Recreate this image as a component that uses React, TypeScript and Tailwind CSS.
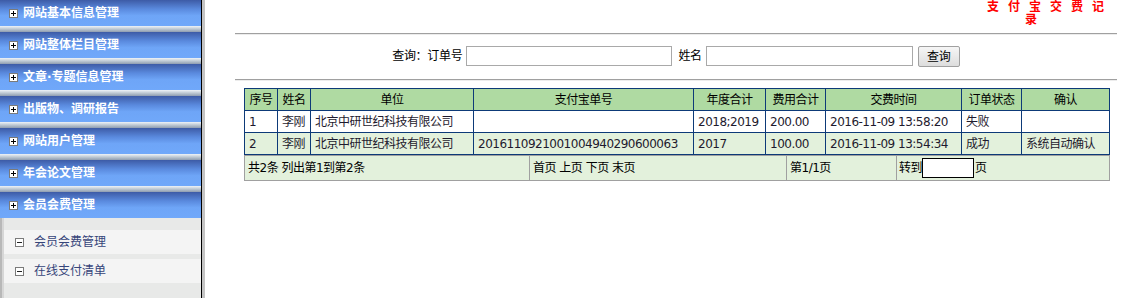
import React from 'react';

const menus = [
  '网站基本信息管理',
  '网站整体栏目管理',
  '文章·专题信息管理',
  '出版物、调研报告',
  '网站用户管理',
  '年会论文管理',
  '会员会费管理',
];

const subItems = ['会员会费管理', '在线支付清单'];

const columns = [
  { title: '序号', w: 'w-[33px]' },
  { title: '姓名', w: 'w-[33px]' },
  { title: '单位', w: 'w-[163px]' },
  { title: '支付宝单号', w: 'w-[220px]' },
  { title: '年度合计', w: 'w-[72px]' },
  { title: '费用合计', w: 'w-[60px]' },
  { title: '交费时间', w: 'w-[136px]' },
  { title: '订单状态', w: 'w-[60px]' },
  { title: '确认', w: 'w-[88px]' },
];

const rows = [
  ['1', '李刚', '北京中研世纪科技有限公司', '', '2018;2019', '200.00', '2016-11-09 13:58:20', '失败', ''],
  ['2', '李刚', '北京中研世纪科技有限公司', '2016110921001004940290600063', '2017', '100.00', '2016-11-09 13:54:34', '成功', '系统自动确认'],
];

function PlusBox() {
  return (
    <svg width="9" height="9" viewBox="0 0 9 9" className="shrink-0">
      <rect x="0.5" y="0.5" width="8" height="8" fill="#fff" stroke="#7a7a7a" />
      <path d="M2 4.5h5M4.5 2v5" stroke="#000" strokeWidth="1" />
    </svg>
  );
}

function MinusBox() {
  return (
    <svg width="9" height="9" viewBox="0 0 9 9" className="shrink-0">
      <rect x="0.5" y="0.5" width="8" height="8" fill="#fff" stroke="#7a7a7a" />
      <path d="M2 4.5h5" stroke="#222" strokeWidth="1" />
    </svg>
  );
}

function Sidebar() {
  return (
    <aside className="flex h-full w-[201px] shrink-0 flex-col">
      {menus.map((m, i) => (
        <div key={m} className="flex flex-col">
          {i > 0 && <div className="h-[6px] bg-[linear-gradient(to_bottom,#eef3f8,#b4c0cc_60%,#8e9cb0)]" />}
          <div className="flex h-[26px] items-center gap-[5px] bg-[linear-gradient(to_bottom,#3d5ba6,#5a8ade_35%,#6ea5f7_60%,#70a8fa)] pl-[9px]">
            <PlusBox />
            <span className="text-[12px] font-bold leading-[14px] text-white">{m}</span>
          </div>
        </div>
      ))}
      <div className="flex flex-1 border-l-[2px] border-[#b8b8b8] bg-[#e8e9e8]">
        <div className="flex flex-1 flex-col gap-[5px] border-l-[2px] border-[#d6d6d6] pt-[12px]">
          {subItems.map((s) => (
            <div key={s} className="flex h-[24px] items-center bg-[#f4f4f4] pl-[11px]">
              <MinusBox />
              <span className="ml-[10px] text-[12px] leading-[14px] text-[#36457a]">{s}</span>
            </div>
          ))}
        </div>
      </div>
    </aside>
  );
}

export default function App() {
  return (
    <div
      className="flex h-[298px] w-[1130px] overflow-hidden bg-white text-[12px] text-black"
      style={{ fontFamily: '"DejaVu Sans", "Noto Sans CJK SC", sans-serif' }}
    >
      <Sidebar />
      <div className="w-px shrink-0 bg-black" />
      <div className="w-[3px] shrink-0 bg-[#c4c4c4]" />

      <main className="flex flex-1 flex-col">
        <div className="h-[33px] pl-[782px] pt-[1px] text-[12px] font-bold leading-[13px] tracking-[9px] text-[#ff0000]">
          <div>支付宝交费记</div>
          <div className="pl-[38px]">录</div>
        </div>

        <div className="ml-[30px] mr-[13px] border-t border-b border-t-[#a0a0a0] border-b-[#ececec]" />

        <div className="ml-[30px] mr-[13px] mt-[11px] flex h-[21px] items-start justify-center tracking-[-0.3px]">
          <span className="mr-[4px] mt-[3px] leading-[14px]">查询：订单号</span>
          <input className="h-[20px] w-[206px] border border-[#a9a9a9] bg-white outline-none" />
          <span className="ml-[6px] mr-[4px] mt-[3px] leading-[14px]">姓名</span>
          <input className="h-[20px] w-[207px] border border-[#a9a9a9] bg-white outline-none" />
          <button className="ml-[5px] h-[21px] w-[42px] rounded-[2px] border border-[#a0a0a0] bg-[linear-gradient(to_bottom,#f6f6f6,#dddddd)] text-[12px] leading-[14px]">
            查询
          </button>
        </div>

        <div className="ml-[30px] mr-[13px] mt-[12px] border-t border-b border-t-[#a0a0a0] border-b-[#ececec]" />

        <div className="ml-[39px] mt-[7px] w-[865px] tracking-[-0.5px]">
          <table className="w-[865px] table-fixed border-collapse border border-[#0d3a78]">
            <thead>
              <tr className="h-[22px] bg-[#afdaa2]">
                {columns.map((c) => (
                  <th key={c.title} className={`${c.w} border border-[#0d3a78] p-0 text-center text-[12px] font-normal leading-[14px]`}>
                    {c.title}
                  </th>
                ))}
              </tr>
            </thead>
            <tbody>
              {rows.map((r, i) => (
                <tr key={i} className={i === 1 ? 'h-[22px] bg-[#e3f1dc]' : 'h-[22px] bg-white'}>
                  {r.map((cell, j) => (
                    <td key={j} className="whitespace-nowrap border border-[#0d3a78] px-[4px] py-0 text-left leading-[14px] text-[#1e1a2e]">
                      {cell}
                    </td>
                  ))}
                </tr>
              ))}
            </tbody>
          </table>

          <table className="w-[865px] table-fixed border-collapse border border-[#a0a0a0] bg-[#e3f1dc]">
            <tbody>
              <tr className="h-[25px]">
                <td className="w-[285px] border border-[#a0a0a0] px-[3px] leading-[14px]">共2条 列出第1到第2条</td>
                <td className="w-[257px] border border-[#a0a0a0] px-[3px] leading-[14px]">首页 上页 下页 末页</td>
                <td className="w-[110px] border border-[#a0a0a0] px-[3px] leading-[14px]">第1/1页</td>
                <td className="w-[213px] border border-[#a0a0a0] px-[2px] leading-[14px]">
                  <div className="flex items-center">
                    <span>转到</span>
                    <input className="h-[20px] w-[52px] border border-black bg-white outline-none" />
                    <span className="ml-[1px]">页</span>
                  </div>
                </td>
              </tr>
            </tbody>
          </table>
        </div>
      </main>
    </div>
  );
}
